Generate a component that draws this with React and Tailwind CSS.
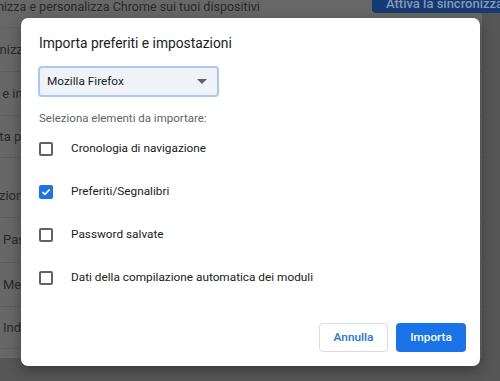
import React, { useState } from "react";

const items = [
  { label: "Cronologia di navigazione", checked: false },
  { label: "Preferiti/Segnalibri", checked: true },
  { label: "Password salvate", checked: false },
  { label: "Dati della compilazione automatica dei moduli", checked: false },
];

// righe della pagina impostazioni dietro il dialog (oscurata)
const bgRows = [
  { text: "Sincronizzazione e servizi Google", h: "h-[44px]", cls: "-ml-[37px]" },
  { text: "Nome e immagine Chrome", h: "h-[44px]", cls: "-ml-[36px]" },
  { text: "Importa preferiti e impostazioni", h: "h-[42px]", cls: "-ml-[35px]" },
  { text: "Compilazione automatica", h: "h-[60px] pt-[16px]", cls: "-ml-[49px]" },
  { text: "Password", h: "h-[45px]", cls: "ml-[3px]" },
  { text: "Metodi di pagamento", h: "h-[44px]", cls: "ml-[3px]" },
  { text: "Indirizzi e altro", h: "h-[42px]", cls: "ml-[3px]" },
];

function Checkbox({ checked, onChange }) {
  return (
    <button
      onClick={onChange}
      className={
        checked
          ? "w-[14px] h-[14px] rounded-[2px] bg-[#1a73e8] flex items-center justify-center"
          : "w-[14px] h-[14px] rounded-[2px] border-2 border-[#5f6368] bg-white"
      }
    >
      {checked && (
        <svg width="10" height="10" viewBox="0 0 12 12" fill="none">
          <path d="M2 6.3l2.6 2.6L10 3.4" stroke="white" strokeWidth="1.9" strokeLinecap="round" strokeLinejoin="round" />
        </svg>
      )}
    </button>
  );
}

export default function App() {
  const [state, setState] = useState(items.map((i) => i.checked));

  return (
    <div
      className="relative w-[500px] h-[381px] overflow-hidden bg-[#565656] text-[#2a2a2a]"
      style={{ fontFamily: "Roboto, 'Liberation Sans', sans-serif" }}
    >
      {/* pagina dietro */}
      <div className="w-[482px] h-[358px] bg-[#676767] flex flex-col">
        <div className="h-[28px] flex items-start justify-between border-b border-[#5d5d5d]">
          <span className="-ml-[38px] text-[12.5px] leading-[14px] whitespace-nowrap">
            Sincronizza e personalizza Chrome sui tuoi dispositivi
          </span>
          <div className="w-[128px] h-[13px] rounded-bl-[4px] bg-[#163a72] text-[#8598bb] text-[13px] leading-[8px] font-medium pl-[14px] whitespace-nowrap overflow-hidden -mr-[18px]">
            Attiva la sincronizzazione
          </div>
        </div>
        {bgRows.map((r, i) => (
          <div
            key={i}
            className={`${r.h} flex items-center border-b border-[#5d5d5d] text-[13px] whitespace-nowrap overflow-hidden`}
          >
            <span className={r.cls}>{r.text}</span>
          </div>
        ))}
      </div>

      {/* dialog */}
      <div className="absolute left-[21px] top-[18px] w-[459px] h-[348px] bg-white rounded-[7px] shadow-[0_4px_14px_rgba(0,0,0,0.35)] flex flex-col pl-[18px] pr-[14px] pt-[15px] pb-[14px]">
        <h2 className="text-[13.8px] leading-[20px] text-[#202124]">Importa preferiti e impostazioni</h2>

        <div className="mt-[13px] -ml-[1px] w-[181px] h-[31px] rounded-[4px] border-2 border-[#a8c7fa] bg-[#eff2f7] flex items-center justify-between pl-[7px] pr-[10px]">
          <span className="text-[11.8px] text-[#202124]">Mozilla Firefox</span>
          <svg width="10" height="5" viewBox="0 0 10 5">
            <path d="M0 0h10L5 5z" fill="#5f6368" />
          </svg>
        </div>

        <p className="mt-[13px] text-[11.5px] leading-[16px] text-[#5f6368]">Seleziona elementi da importare:</p>

        <div className="mt-[1px] flex flex-col">
          {items.map((it, i) => (
            <div key={i} className="h-[43px] flex items-center gap-[18px]">
              <Checkbox
                checked={state[i]}
                onChange={() => setState((s) => s.map((v, j) => (j === i ? !v : v)))}
              />
              <span className="text-[11.8px] text-[#202124]">{it.label}</span>
            </div>
          ))}
        </div>

        <div className="mt-auto flex justify-end gap-[8px]">
          <button className="w-[69px] h-[29px] rounded-[4px] border border-[#dadce0] text-[#1a73e8] text-[11.8px] font-medium">
            Annulla
          </button>
          <button className="w-[70px] h-[29px] rounded-[4px] bg-[#1a73e8] text-white text-[11.8px] font-medium">
            Importa
          </button>
        </div>
      </div>
    </div>
  );
}
